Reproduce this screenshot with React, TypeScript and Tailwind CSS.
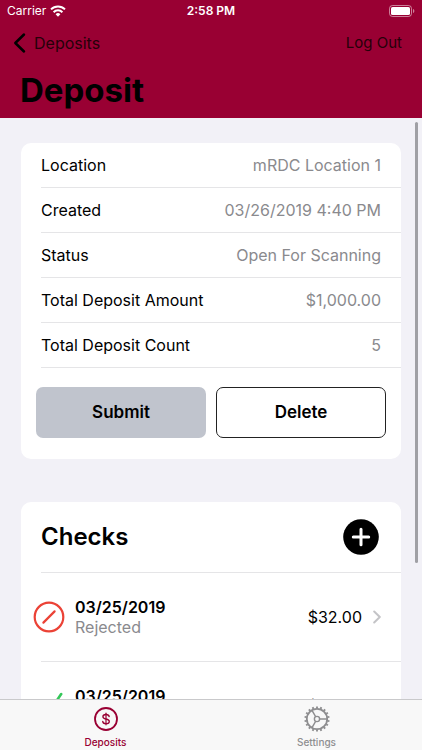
import React from "react";

interface DetailRow {
  label: string;
  value: string;
}

interface Check {
  id: number;
  date: string;
  status: "Rejected" | "Accepted";
  amount: string;
}

const details: DetailRow[] = [
  { label: "Location", value: "mRDC Location 1" },
  { label: "Created", value: "03/26/2019 4:40 PM" },
  { label: "Status", value: "Open For Scanning" },
  { label: "Total Deposit Amount", value: "$1,000.00" },
  { label: "Total Deposit Count", value: "5" },
];

const checks: Check[] = [
  { id: 1, date: "03/25/2019", status: "Rejected", amount: "$32.00" },
  { id: 2, date: "03/25/2019", status: "Accepted", amount: "$32.00" },
];

function WifiIcon() {
  return (
    <svg viewBox="0 0 16 12" className="w-4 h-3" fill="none" stroke="currentColor" strokeWidth="2">
      <path d="M1 4.4a10 10 0 0 1 14 0" />
      <path d="M3.6 7.2a6.2 6.2 0 0 1 8.8 0" />
      <path d="M8 11.8 5.6 9.3a3.4 3.4 0 0 1 4.8 0z" fill="currentColor" stroke="none" />
    </svg>
  );
}

function BatteryIcon() {
  return (
    <svg viewBox="0 0 26 12" className="w-[26px] h-3" fill="none">
      <rect x="0.5" y="0.5" width="22" height="11" rx="3" stroke="#fff" strokeOpacity="0.5" />
      <rect x="2" y="2" width="19" height="8" rx="1.6" fill="#fff" />
      <path d="M24 4v4c.9-.4 1.3-1.1 1.3-2S24.9 4.4 24 4z" fill="#fff" fillOpacity="0.5" />
    </svg>
  );
}

function StatusIcon({ status }: { status: Check["status"] }) {
  if (status === "Rejected") {
    return (
      <svg viewBox="0 0 32 32" className="w-8 h-8 shrink-0" fill="none" stroke="#eb4236" strokeLinecap="round">
        <circle cx="16" cy="16" r="14.3" strokeWidth="2.2" />
        <path d="M10.4 21.6 21.6 10.4" strokeWidth="2.2" />
      </svg>
    );
  }

  return (
    <svg viewBox="0 0 32 32" className="w-8 h-8 shrink-0" fill="none" stroke="#34c759" strokeWidth="2.6" strokeLinecap="round" strokeLinejoin="round">
      <path d="M5 20l7 8L28.2 4" />
    </svg>
  );
}

function DollarIcon() {
  return (
    <svg viewBox="0 0 24 24" className="w-6 h-6" fill="none" stroke="currentColor" strokeLinecap="round">
      <circle cx="12" cy="12" r="11" strokeWidth="1.8" />
      <path d="M12 6.2v11.600" strokeWidth="1.2" />
      <path
        d="M15.2 9.6C15 8.2 13.8 7.5 12 7.5S8.900 8.300 8.900 9.700c0 1.500 1.300 1.900 3.100 2.300s3.300.9 3.300 2.400-1.400 2.300-3.300 2.300-3.200-.9-3.300-2.300"
        strokeWidth="1.3"
      />
    </svg>
  );
}

const TEETH = Array.from({ length: 18 }, (_, i) => i * 20);

function GearIcon() {
  return (
    <svg viewBox="0 0 26 26" className="w-[26px] h-[26px]" fill="none" stroke="currentColor">
      <circle cx="13" cy="13" r="10.2" strokeWidth="1.8" />
      <circle cx="13" cy="13" r="2.6" strokeWidth="1.4" />
      <path d="M15.6 13H23M11.7 10.75 8 4.3M11.7 15.25 8 21.7" strokeWidth="1.5" />
      {TEETH.map((angle) => (
        <path key={angle} d="M13 2.4V.4" strokeWidth="1.9" transform={`rotate(${angle} 13 13)`} />
      ))}
    </svg>
  );
}

function Header() {
  return (
    <header className="shrink-0 bg-[#990033]">
      <div className="grid grid-cols-3 items-center h-[22px] px-[7px] text-white text-xs">
        <div className="flex items-center gap-1">
          <span>Carrier</span>
          <WifiIcon />
        </div>
        <span className="text-center font-semibold">2:58 PM</span>
        <div className="flex justify-end">
          <BatteryIcon />
        </div>
      </div>
      <div className="flex items-center justify-between h-[42px] pl-3 pr-5 text-[#260009]">
        <button type="button" className="flex items-center gap-2 text-base">
          <svg viewBox="0 0 14 22" className="w-[14px] h-[22px]" fill="none" stroke="#000" strokeWidth="2.5" strokeLinecap="round" strokeLinejoin="round">
            <path d="M12 2.5 3.3 11l8.7 8.5" />
          </svg>
          Deposits
        </button>
        <button type="button" className="text-[15px]">
          Log Out
        </button>
      </div>
      <h1 className="h-[54px] px-5 text-[33px] leading-[52px] font-bold text-black">Deposit</h1>
    </header>
  );
}

function DetailsCard() {
  return (
    <section className="rounded-[10px] bg-white">
      <dl className="pl-5">
        {details.map((row) => (
          <div key={row.label} className="flex items-center justify-between h-[45px] pr-5 border-b border-[#e5e5e7] text-base">
            <dt>{row.label}</dt>
            <dd className="text-[#8a8a8e]">{row.value}</dd>
          </div>
        ))}
      </dl>
      <div className="grid grid-cols-2 gap-[10px] px-[15px] pt-[19px] pb-[21px] text-[17px] font-semibold">
        <button type="button" className="h-[51px] rounded-[7px] bg-[#c0c4cd]">
          Submit
        </button>
        <button type="button" className="h-[51px] rounded-[7px] border border-[#222] bg-white">
          Delete
        </button>
      </div>
    </section>
  );
}

function ChecksCard() {
  return (
    <section className="rounded-[10px] bg-white">
      <div className="flex items-center justify-between h-[71px] ml-5 pr-[22px] border-b border-[#e5e5e7]">
        <h2 className="text-2xl font-semibold">Checks</h2>
        <button type="button" aria-label="Add check" className="rounded-full">
          <svg viewBox="0 0 36 36" className="w-9 h-9" fill="none">
            <circle cx="18" cy="18" r="17.8" fill="#000" />
            <path d="M18 10.3v15.400M10.3 18h15.400" stroke="#fff" strokeWidth="3" strokeLinecap="round" />
          </svg>
        </button>
      </div>
      <ul>
        {checks.map((check) => (
          <li key={check.id}>
            <button type="button" className="flex items-center w-full h-[88px] pl-3 pr-5 text-left">
              <StatusIcon status={check.status} />
              <span className="flex flex-col flex-1 ml-[10px] leading-5">
                <span className="text-base leading-5 font-semibold">{check.date}</span>
                <span className="text-base leading-5 text-[#8a8a8e]">{check.status}</span>
              </span>
              <span className="text-base">{check.amount}</span>
              <svg viewBox="0 0 8 14" className="w-2 h-[14px] ml-[11px]" fill="none" stroke="#c4c4c7" strokeWidth="2" strokeLinecap="round" strokeLinejoin="round">
                <path d="M1.2 1.5 6.8 7l-5.6 5.5" />
              </svg>
            </button>
            <hr className="ml-5 border-[#e5e5e7]" />
          </li>
        ))}
      </ul>
    </section>
  );
}

function TabBar() {
  return (
    <nav className="grid grid-cols-2 shrink-0 h-[51px] border-t border-[#c9c9cb] bg-[#f8f8f8] text-[10px] font-medium">
      <a href="#deposits" className="flex flex-col items-center pt-[7px] gap-1 text-[#990033]">
        <DollarIcon />
        <span>Deposits</span>
      </a>
      <a href="#settings" className="flex flex-col items-center pt-[6px] gap-[3px] text-[#8e8e90]">
        <GearIcon />
        <span>Settings</span>
      </a>
    </nav>
  );
}

export default function App() {
  return (
    <div className="flex flex-col h-screen bg-[#f2f1f7] text-black font-['Inter','Liberation_Sans',sans-serif]">
      <Header />
      <div className="relative flex-1 min-h-0">
        <main className="h-full overflow-y-auto [scrollbar-width:none] flex flex-col gap-[43px] px-[21px] pt-[25px]">
          <DetailsCard />
          <ChecksCard />
        </main>
        {/* scroll position indicator */}
        <div className="absolute top-1 right-1 w-[3px] h-[441px] rounded-full bg-[#a0a0a5]" />
      </div>
      <TabBar />
    </div>
  );
}
